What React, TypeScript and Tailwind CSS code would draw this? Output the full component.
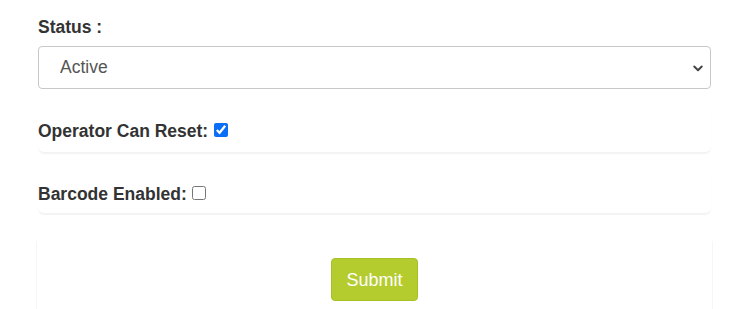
import { useState } from "react";

export default function App() {
  const [status, setStatus] = useState("Active");
  const [canReset, setCanReset] = useState(true);
  const [barcode, setBarcode] = useState(false);

  return (
    <div className="min-h-[309px] bg-white font-['Liberation_Sans',Arial,sans-serif] text-[#333]">
      <form className="ml-[38px] mr-[23px] pt-[17px]" onSubmit={(e) => e.preventDefault()}>
        <div>
          <label className="block text-[17.5px] font-bold leading-5 mb-[9px]">Status :</label>
          <div className="relative">
            <select
              value={status}
              onChange={(e) => setStatus(e.target.value)}
              className="w-full h-[43px] appearance-none border border-[#c8c8c8] rounded-[4px] bg-white pl-[21px] pr-10 text-[17.5px] text-[#555] focus:outline-none"
            >
              <option>Active</option>
              <option>Inactive</option>
            </select>
            <svg
              className="pointer-events-none absolute right-[7px] top-1/2 -translate-y-1/2"
              width="12"
              height="12"
              viewBox="0 0 16 16"
              fill="none"
              stroke="#444"
              strokeWidth="2.6"
              strokeLinecap="round"
              strokeLinejoin="round"
            >
              <path d="M3 6l5 5 5-5" />
            </svg>
          </div>
        </div>

        <div className="mt-[20px] h-[44px] rounded-b-[6px] shadow-[0_1px_1px_rgba(0,0,0,0.05)] border-b border-[#f3f3f3] flex items-start pt-[12px]">
          <label className="flex items-center text-[17.5px] font-bold leading-5">
            Operator Can Reset:
            <input
              type="checkbox"
              checked={canReset}
              onChange={(e) => setCanReset(e.target.checked)}
              className="ml-[6px] -mt-[2px] w-[14px] h-[14px] accent-[#0b6ef7]"
            />
          </label>
        </div>

        <div className="mt-[17px] h-[44px] rounded-b-[6px] shadow-[0_1px_1px_rgba(0,0,0,0.05)] border-b border-[#f3f3f3] flex items-start pt-[14px]">
          <label className="flex items-center text-[17.5px] font-bold leading-5">
            Barcode Enabled:
            <input
              type="checkbox"
              checked={barcode}
              onChange={(e) => setBarcode(e.target.checked)}
              className="ml-[5px] -mt-[2px] w-[14px] h-[14px]"
            />
          </label>
        </div>

        <div className="mt-[27px] -mx-[2px] h-[68px] border-x border-[#f6f6f6] flex justify-center pt-[17px]">
          <button
            type="submit"
            className="h-[43px] w-[87px] rounded-[4px] bg-[#b5cc2e] border border-[#a8bf25] text-white text-lg"
          >
            Submit
          </button>
        </div>
      </form>
    </div>
  );
}
